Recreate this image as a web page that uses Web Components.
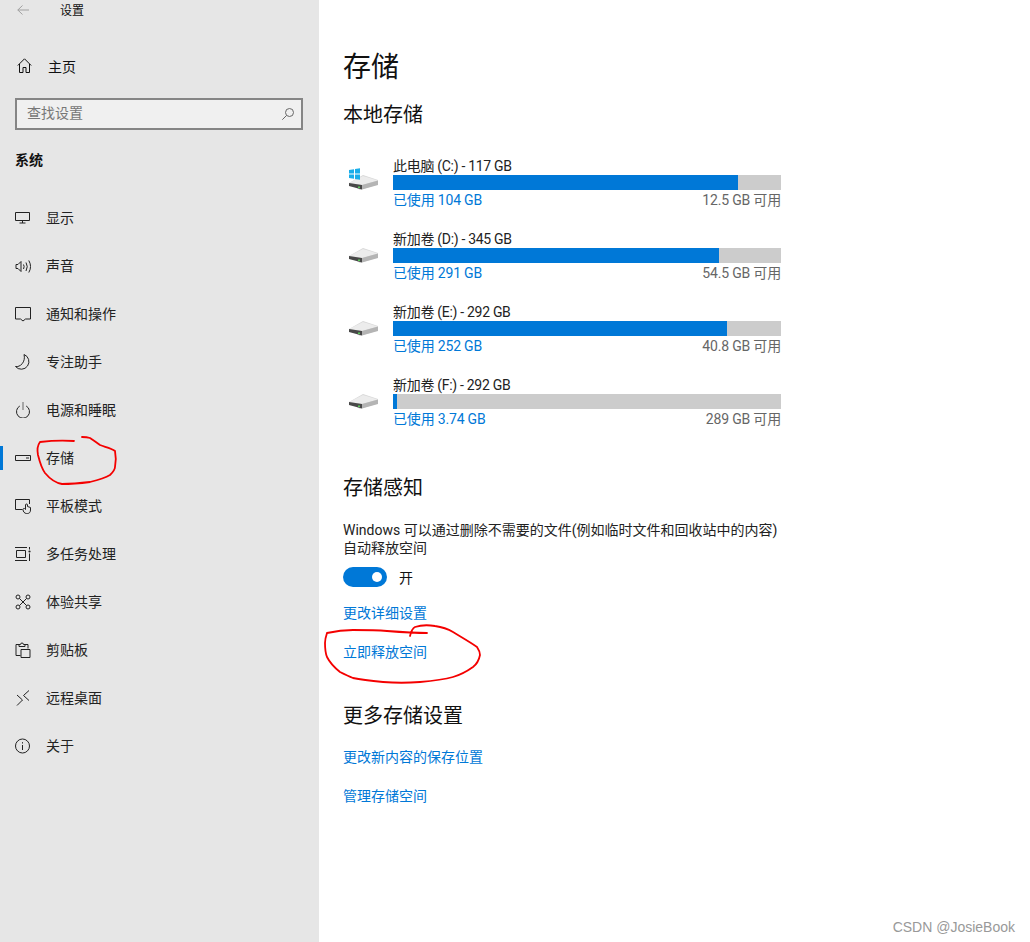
<!DOCTYPE html>
<html lang="zh">
<head>
<meta charset="utf-8">
<title>设置</title>
<style>
	html, body { margin: 0; padding: 0; background: #fff; }
	body {
		width: 1030px;
		height: 942px;
		overflow: hidden;
		font-family: Roboto, "Noto Sans CJK SC", sans-serif;
		font-size: 14px;
		color: #1a1a1a;
	}
</style>
</head>
<body>

<settings-page>
	<settings-sidebar slot="side">
		<nav-item icon="display" label="显示"></nav-item>
		<nav-item icon="sound" label="声音"></nav-item>
		<nav-item icon="notify" label="通知和操作"></nav-item>
		<nav-item icon="moon" label="专注助手"></nav-item>
		<nav-item icon="power" label="电源和睡眠"></nav-item>
		<nav-item icon="storage" label="存储" active></nav-item>
		<nav-item icon="tablet" label="平板模式"></nav-item>
		<nav-item icon="multi" label="多任务处理"></nav-item>
		<nav-item icon="share" label="体验共享"></nav-item>
		<nav-item icon="clip" label="剪贴板"></nav-item>
		<nav-item icon="remote" label="远程桌面"></nav-item>
		<nav-item icon="info" label="关于"></nav-item>
	</settings-sidebar>

	<storage-main slot="main">
		<drive-row os name="此电脑 (C:) - 117 GB" used="已使用 104 GB" free="12.5 GB 可用" fill="345"></drive-row>
		<drive-row name="新加卷 (D:) - 345 GB" used="已使用 291 GB" free="54.5 GB 可用" fill="326"></drive-row>
		<drive-row name="新加卷 (E:) - 292 GB" used="已使用 252 GB" free="40.8 GB 可用" fill="334"></drive-row>
		<drive-row name="新加卷 (F:) - 292 GB" used="已使用 3.74 GB" free="289 GB 可用" fill="4"></drive-row>
	</storage-main>
</settings-page>

<pen-marks></pen-marks>
<water-mark>CSDN @JosieBook</water-mark>

<script>
const ICONS = {
	display: '<path d="M.5 2.500h14v8H.5zM7.500 10.500v2.500M4.500 13h6"/>',
	sound: '<path d="M1 6.500h2l3-3v10l-3-3H1zM8.500 6.500q1.300 2 0 4.500M11 4.500q2.500 4 0 8.500M13.800 2.500q3.500 6 0 12"/>',
	notify: '<path d="M.5 1.500h15v11.500h-5l-2.500 2-2.500-2h-5z"/>',
	moon: '<path d="M9 .5A7.600 7.600 0 1 1 .5 12.500C5 13.500 11 8 9 .5z"/>',
	power: '<path d="M4.800 4a6.500 6.500 0 1 0 6.400 0"/><path d="M8 0v8" stroke="#666"/>',
	storage: '<path d="M.5 5.500h15v5H.5zM11 8h3"/>',
	tablet: '<path d="M7.500 11.500H.5v-10h14V6"/><path d="M8 11.500c0 2 1.500 4 3.500 4h1c1.500 0 3-1 3-3.500V9.500l-3-1V7a1 1 0 0 0-2 0v4.500l-1-1c-.5-.5-1.500 0-1.500 1z"/>',
	multi: '<path d="M0 1.500h12M0 14.500h12M1.500 4.500h9v7h-9zM14.500 1v2.500M14.500 7.500V15"/><circle cx="14.500" cy="5.500" r="1.100" fill="currentColor" stroke="none"/>',
	share: '<circle cx="3" cy="3" r="2"/><circle cx="13" cy="3" r="2"/><circle cx="3" cy="13" r="2"/><circle cx="13" cy="13" r="2"/><path d="M4.500 4.500l7 7M11.500 4.500l-7 7"/>',
	clip: '<path d="M5.500 13.500h-4.500v-11h3M10 2.500h3v4M4 4.500V2.500h1.500a1.500 1.500 0 0 1 3 0H10v2zM6 7.500h9v8H6z"/>',
	remote: '<path d="M2 5l5.500 5L2 15.500M14 .5L8.500 5.500l5.500 5"/>',
	info: '<circle cx="7.500" cy="8" r="7"/><path d="M7.500 7v5M7.500 4.200v1.300"/>'
}

function svgIcon(name) {
	return `<svg width="16" height="16" viewBox="0 0 16 16" fill="none" stroke="currentColor" stroke-width="1">${ICONS[name]}</svg>`
}

customElements.define('settings-page', class extends HTMLElement {
	constructor() {
		super()
		this.attachShadow({mode: 'open'}).innerHTML = `
			<style>
				:host { display: flex; width: 1030px; height: 942px; }
				.side { flex: 0 0 319px; background: #e6e6e6; }
				.main { flex: 1; background: #fff; }
			</style>
			<div class="side"><slot name="side"></slot></div>
			<div class="main"><slot name="main"></slot></div>
		`
	}
})

customElements.define('settings-sidebar', class extends HTMLElement {
	constructor() {
		super()
		this.attachShadow({mode: 'open'}).innerHTML = `
			<style>
				:host { display: block; }
				.top { display: flex; align-items: center; height: 20px; font-size: 12px; color: #111; }
				.top svg { margin-left: 17px; color: #a0a0a0; }
				.top span { margin-left: 31px; padding-bottom: 2px; }
				.home { display: flex; align-items: center; height: 48px; margin-top: 22px; padding-left: 17px; color: #111; }
				.home span { margin-left: 15px; }
				.search { display: flex; align-items: center; justify-content: space-between; box-sizing: border-box;
					width: 288px; height: 32px; margin: 8px 0 0 15px; padding: 0 7px 5px 10px;
					border: 2px solid #858585; background: #f0f0f0; color: #777; }
				.search svg { margin-top: 5px; color: #666; }
				.head { margin: 19px 0 0 15px; height: 22px; line-height: 22px; font-weight: 700; font-size: 14px; color: #111; }
				.list { margin-top: 22px; }
			</style>
			<div class="top">
				<svg width="12" height="10" viewBox="0 0 12 10" fill="none" stroke="currentColor"><path d="M12 5H.8M5.500.5L.8 5l4.700 4.500"/></svg>
				<span>设置</span>
			</div>
			<div class="home">
				<svg width="16" height="16" viewBox="0 0 16 16" fill="none" stroke="currentColor"><path d="M.8 7.500L7.500.8l6.700 6.700M2.500 6v8.500h3.500v-5h3v5h3.500V6"/></svg>
				<span>主页</span>
			</div>
			<div class="search">
				<span>查找设置</span>
				<svg width="12" height="12" viewBox="0 0 12 12" fill="none" stroke="currentColor"><circle cx="7.500" cy="4.500" r="4"/><path d="M4.500 7.500L.3 11.700"/></svg>
			</div>
			<div class="head">系统</div>
			<div class="list"><slot></slot></div>
		`
	}
})

customElements.define('nav-item', class extends HTMLElement {
	constructor() {
		super()
		const active = this.hasAttribute('active')
		this.attachShadow({mode: 'open'}).innerHTML = `
			<style>
				:host { display: flex; position: relative; align-items: center; height: 48px; padding-left: 15px; color: #222; }
				svg { margin-top: 2px; }
				span { margin-left: 15px; font-size: 14px; }
				.mark { position: absolute; left: 0; top: 13px; width: 3px; height: 24px; background: #0078d7; }
			</style>
			${active ? '<div class="mark"></div>' : ''}
			${svgIcon(this.getAttribute('icon'))}
			<span>${this.getAttribute('label')}</span>
		`
	}
})

customElements.define('drive-row', class extends HTMLElement {
	constructor() {
		super()
		const winLogo = this.hasAttribute('os') ? `
			<path fill="#19aeea" d="M1 3l5-.8v4.300H1zM7 2l5-.8v5.300H7zM1 7.500h5v4.300l-5-.8zM7 7.500h5v5.300l-5-.8z"/>` : ''
		this.attachShadow({mode: 'open'}).innerHTML = `
			<style>
				:host { display: grid; grid-template-columns: 50px 388px; height: 73px; box-sizing: border-box; }
				svg { margin: 10px 0 0 5px; }
				.name { height: 18px; line-height: 18px; font-size: 14px; letter-spacing: -.3px; color: #222; }
				.bar { height: 15px; background: #ccc; }
				.fill { height: 100%; background: #0078d7; width: ${this.getAttribute('fill')}px; }
				.info { display: flex; justify-content: space-between; height: 20px; line-height: 20px; font-size: 14px; letter-spacing: -.18px; }
				.used { color: #0078d7; }
				.free { color: #666; }
			</style>
			<svg width="32" height="32" viewBox="0 0 32 32">
				<path d="M1 16L15 8l15 5-2 5-16 5z" fill="#d8d8d8"/>
				<path d="M1 16L15 9l15 4.500-16 4.500z" fill="#ececec"/>
				<path d="M1 16l13 2v4.500L1 19z" fill="#484848"/>
				<path d="M14 18l16-4.500V18l-16 4.500z" fill="#b4b4b4"/>
				<rect x="10" y="19.500" width="2" height="1.500" fill="#5ac85a"/>
				${winLogo}
			</svg>
			<div>
				<div class="name">${this.getAttribute('name')}</div>
				<div class="bar"><div class="fill"></div></div>
				<div class="info"><span class="used">${this.getAttribute('used')}</span><span class="free">${this.getAttribute('free')}</span></div>
			</div>
		`
	}
})

customElements.define('toggle-switch', class extends HTMLElement {
	constructor() {
		super()
		this.attachShadow({mode: 'open'}).innerHTML = `
			<style>
				:host { display: flex; align-items: center; }
				.track { display: flex; align-items: center; justify-content: flex-end; box-sizing: border-box;
					width: 44px; height: 20px; padding-right: 5px; border-radius: 10px; background: #0078d7; }
				.knob { width: 10px; height: 10px; border-radius: 50%; background: #fff; }
				span { margin-left: 12px; font-size: 14px; color: #111; }
			</style>
			<div class="track"><div class="knob"></div></div>
			<span><slot></slot></span>
		`
	}
})

customElements.define('storage-main', class extends HTMLElement {
	constructor() {
		super()
		this.attachShadow({mode: 'open'}).innerHTML = `
			<style>
				:host { display: block; padding-left: 24px; color: #111; }
				h1 { margin: 0; padding-top: 46px; height: 44px; line-height: 44px; font-size: 28px; font-weight: 400; }
				h2 { margin: 0; height: 28px; line-height: 28px; font-size: 20px; font-weight: 400; }
				.local { margin-top: 11px; }
				.drives { margin-top: 28px; }
				.sense { margin-top: 25px; }
				p { margin: 19px 0 0; width: 445px; line-height: 18px; font-size: 14px; color: #222; }
				toggle-switch { margin-top: 10px; }
				a { display: block; color: #0078d7; font-size: 14px; height: 20px; line-height: 20px; }
				.a1 { margin-top: 16px; }
				.a2 { margin-top: 19px; }
				.more { margin-top: 40px; }
				.a3 { margin-top: 17px; }
			</style>
			<h1>存储</h1>
			<h2 class="local">本地存储</h2>
			<div class="drives"><slot></slot></div>
			<h2 class="sense">存储感知</h2>
			<p>Windows 可以通过删除不需要的文件(例如临时文件和回收站中的内容)<br>自动释放空间</p>
			<toggle-switch>开</toggle-switch>
			<a class="a1">更改详细设置</a>
			<a class="a2">立即释放空间</a>
			<h2 class="more">更多存储设置</h2>
			<a class="a3">更改新内容的保存位置</a>
			<a class="a2">管理存储空间</a>
		`
	}
})

// red pen strokes lie over the page
customElements.define('pen-marks', class extends HTMLElement {
	constructor() {
		super()
		this.attachShadow({mode: 'open'}).innerHTML = `
			<style>
				:host { position: absolute; left: 0; top: 0; width: 1030px; height: 942px; pointer-events: none; }
			</style>
			<svg width="1030" height="942" fill="none" stroke="#f40000" stroke-width="1.800" stroke-linecap="round">
				<path d="M74 441C62 440 48 441 40 442C37 446 37 450 38 455C40 463 42 469 45 473C50 479 56 483 62 484C72 484 82 483 90 482C98 480 105 478 110 475C113 472 115 470 115 467C116 462 116 456 115 451C111 448 105 447 100 445C96 442 93 440 90 438C87 437 84 437 82 437"/>
				<path d="M410 636C411 632 413 628 415 627C421 625 429 625 435 626C442 627 448 629 453 632C461 637 470 642 477 647C479 650 480 652 480 655C479 660 477 664 473 667C466 672 460 675 453 677C442 680 431 681 420 682C408 683 395 683 383 682C372 681 362 680 353 678C348 676 344 674 340 672C335 668 330 663 327 657C325 652 325 648 325 643C325 639 326 636 327 633C336 631 344 630 353 630C364 630 376 630 387 631C400 632 414 633 427 633"/>
			</svg>
		`
	}
})

customElements.define('water-mark', class extends HTMLElement {
	constructor() {
		super()
		this.attachShadow({mode: 'open'}).innerHTML = `
			<style>
				:host { position: absolute; right: 15px; top: 918px; font-family: "Liberation Sans", sans-serif; font-size: 14px; line-height: 18px; color: #999; }
			</style>
			<slot></slot>
		`
	}
})
</script>
</body>
</html>
